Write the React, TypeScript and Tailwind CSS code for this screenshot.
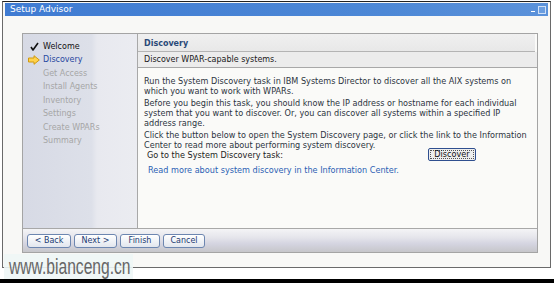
import React from "react";

function Check() {
  return (
    <svg width="9" height="9" viewBox="0 0 9 9">
      <path d="M1 5 L3 8 L8 1" stroke="#111" strokeWidth="1.6" fill="none" strokeLinejoin="round" />
    </svg>
  );
}

function Arrow() {
  return (
    <svg width="12" height="10" viewBox="0 0 12 10">
      <polygon points="0.5,3 6,3 6,0.7 11.3,5 6,9.3 6,7 0.5,7" fill="#ffd24a" stroke="#d09a10" strokeWidth="1" strokeLinejoin="round" />
    </svg>
  );
}

const navItems = [
  { label: "Welcome", state: "done" },
  { label: "Discovery", state: "current" },
  { label: "Get Access", state: "todo" },
  { label: "Install Agents", state: "todo" },
  { label: "Inventory", state: "todo" },
  { label: "Settings", state: "todo" },
  { label: "Create WPARs", state: "todo" },
  { label: "Summary", state: "todo" },
];

function NavButton({ children, w }: { children: React.ReactNode; w: string }) {
  return (
    <div
      className={`${w} h-[14px] flex items-center justify-center rounded-[3px] border border-[#6d86b0] bg-[linear-gradient(to_bottom,#ffffff,#e2e6ee)] text-[#1c3a72] text-[8px] leading-none`}
    >
      {children}
    </div>
  );
}

export default function App() {
  return (
    <div className="relative w-[554px] h-[283px] bg-white overflow-hidden flex flex-col font-['DejaVu_Sans',Verdana,sans-serif] text-[8px]">
      <div className="ml-[2px] mt-[1px] w-[549px] h-[267px] border border-[#6a6a6a] border-t-[#222] bg-[#f8f8f6] flex flex-col">
        {/* title bar */}
        <div className="mx-[2px] mt-[1px] h-[13px] bg-[linear-gradient(to_right,#3f7bd2,#4d88d6_70%,#5b92da)] flex items-center justify-between pl-[5px] pr-[2px]">
          <span className="text-white text-[9px] leading-none">Setup Advisor</span>
          <div className="flex items-center gap-[3px]">
            <div className="w-[4px] h-[1px] bg-white mt-[4px]" />
            <div className="w-[8px] h-[8px] border border-[#cfe0f6] bg-[#6b9ee0]" />
          </div>
        </div>
        {/* body */}
        <div className="pl-[19px] pt-[17px]">
          <div className="w-[516px] h-[220px] border border-[#a4a4a4] flex flex-col bg-[#fafaf8]">
            <div className="flex flex-1 min-h-0">
              {/* nav */}
              <div className="w-[115px] border-r border-[#a8a8a8] bg-[linear-gradient(to_right,#d7dae5,#dde0e9_60%,#e8e9ef_65%,#ebecf1)] pt-[6px]">
                {navItems.map((it) => (
                  <div key={it.label} className="h-[13.5px] flex items-center">
                    <div className="w-[20px] flex items-center justify-center pl-[2px]">
                      {it.state === "done" && <Check />}
                      {it.state === "current" && <Arrow />}
                    </div>
                    <span
                      className={
                        it.state === "done"
                          ? "text-[#111]"
                          : it.state === "current"
                          ? "text-[#2848a0]"
                          : "text-[#a6a6a6]"
                      }
                    >
                      {it.label}
                    </span>
                  </div>
                ))}
              </div>
              {/* content */}
              <div className="flex-1 flex flex-col">
                <div className="h-[18px] mr-[2px] border-b border-[#b4b4b4] bg-[linear-gradient(to_bottom,#f0f0f0,#e8e8e8)] flex items-center pl-[6px] pt-[3px]">
                  <span className="font-bold text-[#2a4a78]">Discovery</span>
                </div>
                <div className="h-[16px] border-b border-[#a8a8a8] bg-[#ececec] flex items-center pl-[6px]">
                  <span className="text-[#1a1a1a]">Discover WPAR-capable systems.</span>
                </div>
                <div className="pl-[6px] pt-[8px] text-[#2c3440] leading-[10px] text-[8.15px]">
                  <p>
                    Run the System Discovery task in IBM Systems Director to discover all the AIX systems on
                    <br />
                    which you want to work with WPARs.
                  </p>
                  <p className="mt-[2px]">
                    Before you begin this task, you should know the IP address or hostname for each individual
                    <br />
                    system that you want to discover. Or, you can discover all systems within a specified IP
                    <br />
                    address range.
                  </p>
                  <p className="mt-[2px]">
                    Click the button below to open the System Discovery page, or click the link to the Information
                    <br />
                    Center to read more about performing system discovery.
                  </p>
                  <div className="flex items-center h-[13px] pl-[3px] mt-[-2px]">
                    <span className="w-[281px] text-[#222]">Go to the System Discovery task:</span>
                    <div className="w-[48px] h-[13px] rounded-[2px] border border-[#2f4f8f] bg-[#eeeeee] p-[1px]">
                      <div className="h-full border border-dotted border-[#555] flex items-center justify-center text-[#111] leading-none">
                        Discover
                      </div>
                    </div>
                  </div>
                  <div className="pl-[4px] mt-[4px] text-[#2b5fb4]">
                    Read more about system discovery in the Information Center.
                  </div>
                </div>
              </div>
            </div>
            {/* button bar */}
            <div className="h-[24px] border-t border-[#a8a8a8] bg-[linear-gradient(to_bottom,#f4f4f6,#e6e6ec_35%,#d4d4e0_65%,#c6c6ca)] flex items-center pl-[4px] gap-[3px]">
              <NavButton w="w-[44px]">&lt; Back</NavButton>
              <NavButton w="w-[43px]">Next &gt;</NavButton>
              <NavButton w="w-[40px]">Finish</NavButton>
              <NavButton w="w-[42px]">Cancel</NavButton>
            </div>
          </div>
        </div>
      </div>
      <div className="mt-auto h-[4px] bg-black" />
      {/* watermark overlay */}
      <div className="absolute left-[4px] top-[254px] w-[129px] h-[25px] bg-[#eef6f6]/90 flex items-center overflow-hidden">
        <span className="ml-[5px] inline-block origin-left scale-x-[0.71] text-[22px] leading-none text-[#666] font-['Liberation_Sans',Arial,sans-serif] font-light whitespace-nowrap">
          www.bianceng.cn
        </span>
      </div>
    </div>
  );
}
